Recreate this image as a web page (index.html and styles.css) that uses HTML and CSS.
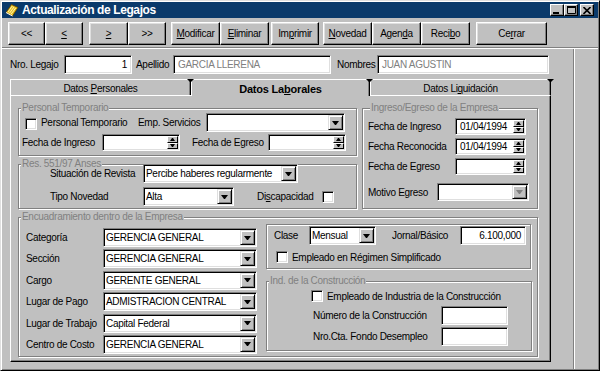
FILE: index.html
```html
<!DOCTYPE html>
<html lang="es">
<head>
    <meta charset="UTF-8">
    <title>Actualización de Legajos</title>
    <link rel="stylesheet" href="styles.css">
</head>
<body>
<div class="window">
    <div class="titlebar">
        <svg class="app-icon" width="14" height="14" viewBox="0 0 14 14">
            <path d="M1 9.5 L6.5 1.5 L13 4.5 L7.5 13 Z" fill="#e8c020" stroke="#5a4000" stroke-width="0.8"/>
            <path d="M3 9 L7.3 3 M4.6 10 L9 4 M6.2 11 L10.6 5" stroke="#fff7c0" stroke-width="0.9"/>
            <path d="M1 9.5 L7.5 13" stroke="#fff" stroke-width="1"/>
        </svg>
        <span class="title">Actualización de Legajos</span>
        <div class="win-controls">
            <span class="win-btn"><svg width="8" height="7" viewBox="0 0 8 7"><rect x="0" y="5" width="6" height="2" fill="#000"/></svg></span>
            <span class="win-btn"><svg width="9" height="8" viewBox="0 0 9 8"><path d="M0.5 1.5 H8.5 V7.5 H0.5 Z" fill="none" stroke="#000"/><rect x="0" y="0" width="9" height="2" fill="#000"/></svg></span>
            <span class="win-btn win-close"><svg width="8" height="7" viewBox="0 0 8 7"><path d="M0.5 0 L7.5 7 M7.5 0 L0.5 7" stroke="#000" stroke-width="1.6"/></svg></span>
        </div>
    </div>

    <div class="toolbar">
        <button class="btn btn-first">&lt;&lt;</button>
        <button class="btn btn-prev"><u>&lt;</u></button>
        <button class="btn btn-next"><u>&gt;</u></button>
        <button class="btn btn-last">&gt;&gt;</button>
        <button class="btn btn-act btn-group-start"><u>M</u>odificar</button>
        <button class="btn btn-act"><u>E</u>liminar</button>
        <button class="btn btn-act btn-print">Im<u>p</u>rimir</button>
        <button class="btn btn-act btn-novedad"><u>N</u>ovedad</button>
        <button class="btn btn-act">Agen<u>d</u>a</button>
        <button class="btn btn-act">Reci<u>b</u>o</button>
        <button class="btn btn-close">Ce<u>r</u>rar</button>
    </div>

    <div class="workspace">
        <div class="main">
            <div class="header-row">
                <span class="lbl lbl-legajo">Nro. Legajo</span>
                <div class="field num field-legajo">1</div>
                <span class="lbl lbl-apellido">Apellido</span>
                <div class="field dim field-apellido">GARCIA LLERENA</div>
                <span class="lbl lbl-nombres">Nombres</span>
                <div class="field dim field-nombres">JUAN AGUSTIN</div>
            </div>

            <div class="tabs">
                <div class="tab-strip">
                    <div class="tab tab-personales"><span>Datos <u>P</u>ersonales</span></div>
                    <div class="tab tab-laborales active"><span>Datos La<u>b</u>orales</span></div>
                    <div class="tab tab-liquidacion"><span>Datos Li<u>q</u>uidación</span></div>
                </div>

                <div class="tab-panel">
                    <div class="top-row">
                        <div class="left-col">
                            <fieldset class="group grp-temp">
                                <legend>Personal Temporario</legend>
                                <div class="row temp-row1">
                                    <span class="check-item check-temp"><span class="checkbox"></span>Personal Temporario</span>
                                    <span class="lbl lbl-emp">Emp. Servicios</span>
                                    <div class="combo combo-emp"><span class="combo-text"></span><span class="drop"></span></div>
                                </div>
                                <div class="row temp-row2">
                                    <span class="lbl lbl-fing">Fecha de Ingreso</span>
                                    <div class="spin spin-temp"><span class="spin-text"></span><span class="spin-btns"><span class="up"></span><span class="down"></span></span></div>
                                    <span class="lbl lbl-feg">Fecha de Egreso</span>
                                    <div class="spin spin-temp"><span class="spin-text"></span><span class="spin-btns"><span class="up"></span><span class="down"></span></span></div>
                                </div>
                            </fieldset>

                            <fieldset class="group grp-anses">
                                <legend>Res. 551/97 Anses</legend>
                                <div class="row anses-row1">
                                    <span class="lbl lbl-anses">Situación de Revista</span>
                                    <div class="combo combo-revista"><span class="combo-text">Percibe haberes regularmente</span><span class="drop"></span></div>
                                </div>
                                <div class="row anses-row2">
                                    <span class="lbl lbl-anses">Tipo Novedad</span>
                                    <div class="combo combo-novedad"><span class="combo-text">Alta</span><span class="drop"></span></div>
                                    <span class="lbl lbl-disc">Di<u>s</u>capacidad</span>
                                    <span class="checkbox"></span>
                                </div>
                            </fieldset>
                        </div>

                        <fieldset class="group grp-ingreso">
                            <legend>Ingreso/Egreso de la Empresa</legend>
                            <div class="row ing-row">
                                <span class="lbl lbl-ing">Fecha de Ingreso</span>
                                <div class="spin spin-ing"><span class="spin-text">01/04/1994</span><span class="spin-btns"><span class="up"></span><span class="down"></span></span></div>
                            </div>
                            <div class="row ing-row">
                                <span class="lbl lbl-ing">Fecha Reconocida</span>
                                <div class="spin spin-ing"><span class="spin-text">01/04/1994</span><span class="spin-btns"><span class="up"></span><span class="down"></span></span></div>
                            </div>
                            <div class="row ing-row">
                                <span class="lbl lbl-ing">Fecha de Egreso</span>
                                <div class="spin spin-ing"><span class="spin-text"></span><span class="spin-btns"><span class="up"></span><span class="down"></span></span></div>
                            </div>
                            <div class="row motivo-row">
                                <span class="lbl lbl-motivo">Motivo Egreso</span>
                                <div class="combo combo-motivo"><span class="combo-text"></span><span class="drop off"></span></div>
                            </div>
                        </fieldset>
                    </div>

                    <fieldset class="group grp-encuadre">
                        <legend>Encuadramiento dentro de la Empresa</legend>
                        <div class="encuadre">
                            <div class="enc-list">
                                <div class="row enc-row">
                                    <span class="lbl lbl-enc">Categoría</span>
                                    <div class="combo combo-enc"><span class="combo-text">GERENCIA GENERAL</span><span class="drop"></span></div>
                                </div>
                                <div class="row enc-row">
                                    <span class="lbl lbl-enc">Sección</span>
                                    <div class="combo combo-enc"><span class="combo-text">GERENCIA GENERAL</span><span class="drop"></span></div>
                                </div>
                                <div class="row enc-row">
                                    <span class="lbl lbl-enc">Cargo</span>
                                    <div class="combo combo-enc"><span class="combo-text">GERENTE GENERAL</span><span class="drop"></span></div>
                                </div>
                                <div class="row enc-row">
                                    <span class="lbl lbl-enc">Lugar de Pago</span>
                                    <div class="combo combo-enc"><span class="combo-text">ADMISTRACION CENTRAL</span><span class="drop"></span></div>
                                </div>
                                <div class="row enc-row">
                                    <span class="lbl lbl-enc">Lugar de Trabajo</span>
                                    <div class="combo combo-enc"><span class="combo-text">Capital Federal</span><span class="drop"></span></div>
                                </div>
                                <div class="row enc-row">
                                    <span class="lbl lbl-enc">Centro de Costo</span>
                                    <div class="combo combo-enc"><span class="combo-text">GERENCIA GENERAL</span><span class="drop"></span></div>
                                </div>
                            </div>

                            <div class="enc-side">
                                <div class="clase-box">
                                    <div class="row clase-row">
                                        <span class="lbl lbl-clase">Clase</span>
                                        <div class="combo combo-clase"><span class="combo-text">Mensual</span><span class="drop"></span></div>
                                        <span class="lbl lbl-jornal">Jornal/Básico</span>
                                        <div class="field num field-jornal">6.100,000</div>
                                    </div>
                                    <div class="row simpl-row">
                                        <span class="check-item"><span class="checkbox"></span>Empleado en Régimen Simplificado</span>
                                    </div>
                                </div>

                                <fieldset class="group grp-constr">
                                    <legend>Ind. de la Construcción</legend>
                                    <div class="row constr-check">
                                        <span class="check-item"><span class="checkbox"></span>Empleado de Industria de la Construcción</span>
                                    </div>
                                    <div class="row constr-row constr-first">
                                        <span class="lbl lbl-constr">Número de la Construcción</span>
                                        <div class="field field-constr"></div>
                                    </div>
                                    <div class="row constr-row">
                                        <span class="lbl lbl-constr">Nro.Cta. Fondo Desempleo</span>
                                        <div class="field field-constr"></div>
                                    </div>
                                </fieldset>
                            </div>
                        </div>
                    </fieldset>
                </div>
            </div>
        </div>
        <div class="side"></div>
    </div>
</div>
</body>
</html>
```

FILE: styles.css
```css
* {
    box-sizing: border-box;
}

body {
    margin: 0;
    background: #c0c0c0;
    font-family: "Liberation Sans", Arial, sans-serif;
    font-size: 10px;
    letter-spacing: -0.3px;
    color: #000;
}

u {
    text-decoration-thickness: 1px;
}

/* ventana */

.window {
    width: 600px;
    height: 371px;
    padding: 1px;
    border: 1px solid;
    border-color: #dfdfdf #000 #000 #dfdfdf;
    box-shadow: inset 1px 1px 0 #fff, inset -1px -1px 0 #808080;
    display: flex;
    flex-direction: column;
    overflow: hidden;
}

.titlebar {
    height: 16px;
    flex: none;
    background: #0a3a6b;
    color: #fff;
    display: flex;
    align-items: center;
    padding: 0 4px 0 3px;
}

.app-icon {
    margin-right: 3px;
}

.title {
    flex: 1;
    font-weight: bold;
    font-size: 12px;
    letter-spacing: -0.4px;
}

.win-controls {
    display: flex;
}

.win-btn {
    width: 14px;
    height: 12px;
    background: #c0c0c0;
    border: 1px solid;
    border-color: #fff #000 #000 #fff;
    box-shadow: inset -1px -1px 0 #808080;
    display: flex;
    align-items: center;
    justify-content: center;
}

.win-close {
    margin-left: 2px;
}

/* barra de botones */

.toolbar {
    height: 30px;
    flex: none;
    display: flex;
    align-items: flex-start;
    padding: 4px 0 0 6px;
    border-bottom: 1px solid #808080;
}

.btn {
    height: 23px;
    padding: 0;
    font: inherit;
    letter-spacing: inherit;
    color: #000;
    background: #c0c0c0;
    border: 1px solid;
    border-color: #fff #000 #000 #fff;
    box-shadow: inset -1px -1px 0 #808080, inset 1px 1px 0 #dfdfdf;
}

.btn-first { width: 37px; }
.btn-prev { width: 38px; }
.btn-next { width: 39px; margin-left: 6px; }
.btn-last { width: 38px; }
.btn-act { width: 49px; }
.btn-group-start { margin-left: 5px; }
.btn-print { width: 48px; margin-left: 2px; }
.btn-novedad { margin-left: 4px; }
.btn-close { width: 71px; margin-left: 6px; }

/* area de trabajo */

.workspace {
    flex: 1;
    display: flex;
    border-top: 1px solid #fff;
}

.main {
    width: 572px;
    border-right: 1px solid #808080;
    padding: 6px 0 0 8px;
}

.side {
    flex: 1;
    border-left: 1px solid #fff;
}

.lbl {
    white-space: nowrap;
    flex: none;
}

.row {
    display: flex;
    align-items: center;
}

.header-row {
    display: flex;
    align-items: center;
    height: 19px;
}

.lbl-legajo { width: 54px; }
.field-legajo { width: 68px; }
.lbl-apellido { width: 37px; margin-left: 4px; }
.field-apellido { width: 158px; }
.lbl-nombres { width: 40px; margin-left: 6px; }
.field-nombres { width: 172px; }

/* controles */

.field {
    height: 19px;
    flex: none;
    background: #fff;
    border: 1px solid;
    border-color: #808080 #fff #fff #808080;
    box-shadow: inset 1px 1px 0 #000, inset -1px -1px 0 #dfdfdf;
    padding: 0 4px;
    display: flex;
    align-items: center;
    white-space: nowrap;
    overflow: hidden;
}

.field.num {
    justify-content: flex-end;
}

.field.dim {
    color: #808080;
}

.combo {
    height: 19px;
    flex: none;
    display: flex;
    padding: 1px;
    background: #fff;
    border: 1px solid;
    border-color: #808080 #fff #fff #808080;
    box-shadow: inset 1px 1px 0 #000, inset -1px -1px 0 #dfdfdf;
}

.combo-text {
    flex: 1;
    display: flex;
    align-items: center;
    padding-left: 1px;
    white-space: nowrap;
    overflow: hidden;
}

.drop {
    width: 15px;
    background: #c0c0c0;
    border: 1px solid;
    border-color: #dfdfdf #000 #000 #dfdfdf;
    box-shadow: inset 1px 1px 0 #fff, inset -1px -1px 0 #808080;
    display: flex;
    align-items: center;
    justify-content: center;
}

.drop::before {
    content: "";
    width: 1px;
    border-left: 3px solid transparent;
    border-right: 3px solid transparent;
    border-top: 4px solid #000;
}

.drop.off::before {
    border-top-color: #808080;
}

.spin {
    height: 17px;
    flex: none;
    display: flex;
    padding: 1px;
    background: #fff;
    border: 1px solid;
    border-color: #808080 #fff #fff #808080;
    box-shadow: inset 1px 1px 0 #000, inset -1px -1px 0 #dfdfdf;
}

.spin-text {
    flex: 1;
    display: flex;
    align-items: center;
    padding-left: 3px;
    white-space: nowrap;
    overflow: hidden;
}

.spin-btns {
    width: 11px;
    display: flex;
    flex-direction: column;
}

.spin-btns span {
    flex: 1;
    background: #c0c0c0;
    border: 1px solid;
    border-color: #fff #000 #000 #fff;
    display: flex;
    align-items: center;
    justify-content: center;
}

.spin-btns .up::before,
.spin-btns .down::before {
    content: "";
    width: 1px;
    border-left: 2px solid transparent;
    border-right: 2px solid transparent;
}

.spin-btns .up::before {
    border-bottom: 3px solid #000;
}

.spin-btns .down::before {
    border-top: 3px solid #000;
}

.checkbox {
    width: 12px;
    height: 12px;
    flex: none;
    background: #fff;
    border: 1px solid;
    border-color: #808080 #fff #fff #808080;
    box-shadow: inset 1px 1px 0 #000, inset -1px -1px 0 #dfdfdf;
}

.check-item {
    display: flex;
    align-items: center;
    white-space: nowrap;
}

.check-item .checkbox {
    margin-right: 4px;
}

.check-temp .checkbox {
    margin-top: 3px;
}

/* solapas */

.tabs {
    margin-top: 5px;
    width: 541px;
}

.tab-strip {
    display: flex;
    height: 16px;
}

.tab {
    position: relative;
    height: 16px;
    border-top: 1px solid #fff;
    border-left: 1px solid #fff;
    border-right: 1px solid #000;
    box-shadow: inset -1px 0 0 #808080;
    background: #c0c0c0;
    display: flex;
    align-items: center;
    justify-content: center;
    padding-top: 1px;
    white-space: nowrap;
}

.tab::after {
    content: "";
    position: absolute;
    top: -1px;
    right: -4px;
    z-index: 2;
    width: 1px;
    border-left: 3px solid transparent;
    border-right: 3px solid transparent;
    border-top: 3px solid #000;
}

.tab-personales { width: 181px; }
.tab-laborales { width: 179px; }
.tab-liquidacion { width: 181px; }

.tab.active {
    z-index: 1;
    height: 17px;
    margin-bottom: -1px;
    font-weight: bold;
    font-size: 11px;
    letter-spacing: -0.2px;
}

.tab-panel {
    height: 267px;
    border: 1px solid;
    border-color: #fff #000 #000 #fff;
    box-shadow: inset -1px -1px 0 #808080;
    padding: 7px 0 0 7px;
}

/* grupos */

.group {
    margin: 0;
    padding: 0;
    min-width: 0;
    border: 1px solid #808080;
    box-shadow: inset 1px 1px 0 #fff, 1px 1px 0 #fff;
}

.group legend {
    margin-left: 2px;
    padding: 0 1px;
    line-height: 10px;
    color: #808080;
    background: #c0c0c0;
}

.top-row {
    display: flex;
}

.left-col {
    width: 339px;
}

.grp-temp {
    padding: 0 0 4px 0;
}

.temp-row1 {
    height: 19px;
    padding-left: 6px;
}

.check-temp { width: 113px; }
.lbl-emp { width: 68px; }
.combo-emp { width: 139px; }

.temp-row2 {
    height: 17px;
    margin-top: 2px;
    padding-left: 3px;
}

.lbl-fing { width: 80px; }
.spin-temp { width: 78px; }
.lbl-feg { width: 76px; margin-left: 12px; }

.grp-anses {
    margin-top: 3px;
    padding-bottom: 2px;
}

.anses-row1 {
    height: 19px;
    margin-top: -5px;
    padding-left: 31px;
}

.anses-row2 {
    height: 19px;
    margin-top: 4px;
    padding-left: 31px;
}

.lbl-anses { width: 93px; }
.combo-revista { width: 155px; }
.combo-novedad { width: 91px; }
.lbl-disc { width: 65px; margin-left: 23px; }

.grp-ingreso {
    width: 176px;
    margin-left: 5px;
    padding: 2px 0 7px 5px;
}

.ing-row {
    height: 17px;
    margin-top: 3px;
}

.lbl-ing { width: 87px; }
.spin-ing { width: 71px; }

.motivo-row {
    height: 18px;
    margin-top: 8px;
}

.motivo-row .combo { height: 18px; }
.lbl-motivo { width: 69px; }
.combo-motivo { width: 92px; }

.grp-encuadre {
    width: 520px;
    height: 145px;
    margin-top: 3px;
}

.encuadre {
    display: flex;
    align-items: flex-start;
}

.enc-list {
    display: flex;
    flex-direction: column;
    gap: 2.4px;
    padding: 6px 0 0 7px;
}

.enc-row {
    height: 19px;
}

.lbl-enc { width: 77px; }
.combo-enc { width: 154px; }

.enc-side {
    margin: 2px 0 0 9px;
}

.clase-box {
    width: 265px;
    height: 45px;
    border: 1px solid #808080;
    box-shadow: inset 1px 1px 0 #fff, 1px 1px 0 #fff;
    padding: 1px 0 0 7px;
}

.clase-row {
    height: 19px;
}

.lbl-clase { width: 35px; }
.combo-clase { width: 67px; }
.lbl-jornal { width: 68px; margin-left: 16px; }
.field-jornal { width: 66px; }

.simpl-row {
    height: 18px;
    margin-top: 3px;
    padding-left: 2px;
}

.grp-constr {
    width: 266px;
    height: 75px;
    margin-top: 7px;
}

.constr-check {
    height: 14px;
    margin-top: 3px;
    padding-left: 44px;
}

.constr-row {
    height: 19px;
    margin-top: 2px;
    padding-left: 46px;
}

.constr-first {
    margin-top: 3px;
}

.lbl-constr { width: 128px; }
.field-constr { width: 67px; }
```
